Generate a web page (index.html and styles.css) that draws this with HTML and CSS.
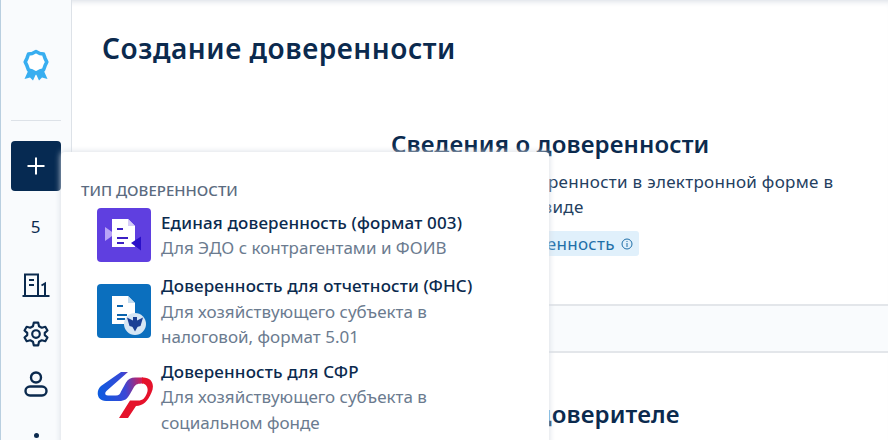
FILE: index.html
```html
<html>
    <head>
        <meta name="viewport" content="width=device-width, initial-scale=1.0">
        <link rel="stylesheet" href="styles.css">
    </head>
    <body>
        <div class="app">
            <aside class="sidebar">
                <div class="logo">
                    <svg width="28" height="32" viewBox="0 0 28 32" fill="none">
                        <path d="M6.500 21 L2.500 30 L8 28.500 L11 31.500 L14 25 L17 31.500 L20 28.500 L25.500 30 L21.500 21 Z" fill="#38aef0"/>
                        <polygon points="14,2.500 17.800,4.500 21.500,5 23,9.200 24.800,13 23,16.800 21.500,21 17.800,22 14,24 10.200,22 6.500,21 5,16.800 3.200,13 5,9.200 6.500,5 10.200,4.500" stroke="#38aef0" stroke-width="3.600" stroke-linejoin="round" fill="#fff"/>
                    </svg>
                </div>
                <div class="divider"></div>
                <button class="add-btn">
                    <svg width="20" height="20" viewBox="0 0 20 20"><path d="M10 1.500 V18.500 M1.500 10 H18.500" stroke="#fff" stroke-width="2"/></svg>
                </button>
                <div class="count">5</div>
                <div class="nav-icon nav-building">
                    <svg width="28" height="24" viewBox="0 0 28 24" fill="none" stroke="#0b2a4e" stroke-width="2">
                        <path d="M0.500 23 H27.500 M3 23 V1.500 H16 V23"/>
                        <path d="M7 7 H12 M7 12 H12" stroke-width="2.200"/>
                        <path d="M19.500 12.500 L23 10.500 V23" />
                    </svg>
                </div>
                <div class="nav-icon nav-gear">
                    <svg width="26" height="26" viewBox="0 0 24 24" fill="none" stroke="#0b2a4e" stroke-width="2" stroke-linejoin="round">
                        <circle cx="12" cy="12" r="3.500"/>
                        <path d="M10 1.500 H14 L14.800 4.800 L17.300 6.200 L20.600 5.300 L22.600 8.700 L20.100 11 V13 L22.600 15.300 L20.600 18.700 L17.300 17.800 L14.800 19.200 L14 22.500 H10 L9.200 19.200 L6.700 17.800 L3.400 18.700 L1.400 15.300 L3.900 13 V11 L1.400 8.700 L3.400 5.300 L6.700 6.200 L9.200 4.800 Z"/>
                    </svg>
                </div>
                <div class="nav-icon nav-user">
                    <svg width="24" height="26" viewBox="0 0 24 26" fill="none" stroke="#0b2a4e" stroke-width="2.400">
                        <circle cx="12" cy="6.500" r="5"/>
                        <rect x="1.500" y="15.500" width="21" height="9" rx="4.500"/>
                    </svg>
                </div>
                <div class="dot"></div>
            </aside>

            <main class="content">
                <h1 class="page-title">Создание доверенности</h1>
                <section class="info">
                    <h2>Сведения о доверенности</h2>
                    <p>Оформление доверенности в электронной форме в<br>и установленном виде</p>
                    <span class="tag">
                        Что такое доверенность
                        <svg width="12" height="12" viewBox="0 0 12 12" fill="none" stroke="#1f6fa8"><circle cx="6" cy="6" r="5"/><path d="M6 5 V9 M6 3 V4"/></svg>
                    </span>
                </section>
                <div class="strip"></div>
                <section class="info info-second">
                    <h2>Сведения о доверителе</h2>
                </section>
            </main>
        </div>

        <div class="menu">
            <div class="menu-title">ТИП ДОВЕРЕННОСТИ</div>
            <div class="menu-item">
                <div class="menu-icon icon-purple">
                    <svg width="54" height="54" viewBox="0 0 54 54">
                        <path d="M8 19 L18 26 L8 33 Z" fill="#b9a4f7"/>
                        <path d="M15 11 H31 L38 18 V39 H15 Z" fill="#fff"/>
                        <path d="M31 11 L38 18 H31 Z" fill="#d5ccf8"/>
                        <path d="M20 21 H26 M20 30 H31 M20 35 H27" stroke="#3b1fc4" stroke-width="2"/>
                        <path d="M34 35 L44 28.500 V42.500 Z" fill="#2a10c8"/>
                    </svg>
                </div>
                <div class="menu-text">
                    <div class="menu-name">Единая доверенность (формат 003)</div>
                    <div class="menu-desc">Для ЭДО с контрагентами и ФОИВ</div>
                </div>
            </div>
            <div class="menu-item">
                <div class="menu-icon icon-blue">
                    <svg width="54" height="54" viewBox="0 0 54 54">
                        <path d="M15 12 H31 L38 19 V40 H15 Z" fill="#fff"/>
                        <path d="M31 12 L38 19 H31 Z" fill="#c4dcf0"/>
                        <path d="M20 22 H26 M20 31 H30 M20 35 H28" stroke="#0b63ad" stroke-width="2"/>
                        <circle cx="38" cy="40" r="11" fill="#d6e6f4"/>
                        <path d="M30 33.500 L36 36.500 V43 L32.500 42 Z M46 33.500 L40 36.500 V43 L43.500 42 Z" fill="#1b3f94"/>
                        <path d="M36 33 H40 V38 L40.500 43 L38 47.500 L35.500 43 L36 38 Z" fill="#1b3f94"/>
                    </svg>
                </div>
                <div class="menu-text">
                    <div class="menu-name">Доверенность для отчетности (ФНС)</div>
                    <div class="menu-desc">Для хозяйствующего субъекта в<br>налоговой, формат 5.01</div>
                </div>
            </div>
            <div class="menu-item">
                <div class="menu-icon">
                    <svg width="56" height="50" viewBox="0 0 56 50">
                        <defs>
                            <linearGradient id="sfr-blue" gradientUnits="userSpaceOnUse" x1="0" y1="20" x2="46" y2="14">
                                <stop offset="0" stop-color="#0b5ce0"/>
                                <stop offset="0.600" stop-color="#3a47d6"/>
                                <stop offset="1" stop-color="#d81c50"/>
                            </linearGradient>
                        </defs>
                        <path d="M24 2 L4 16 C-1 20 -1 31 9 31 H22 C28 31 30 29 33 24 L37 17 C39 14 41 13.500 46 13.500 V7.500 H38 C34 7.500 31 9 29 12.500 L24 21.500 C23 24 22 25.500 19 25.500 H11 C7.500 25.500 7.500 22.500 10 20.500 L31 2 Z" fill="url(#sfr-blue)"/>
                        <path d="M45 7.500 H46 C55 7.500 58 15 54.500 22.500 C51 31 46 36 39 36 L31 48 H22 L33 30.500 H41 C46 30.500 48 28 50 23 C52 18 49 13.500 45 13.500 Z" fill="#e5122b"/>
                    </svg>
                </div>
                <div class="menu-text">
                    <div class="menu-name">Доверенность для СФР</div>
                    <div class="menu-desc">Для хозяйствующего субъекта в<br>социальном фонде</div>
                </div>
            </div>
        </div>
    </body>
</html>
```

FILE: styles.css
```css
html, body {
    margin: 0;
    height: 100%;
    overflow: hidden;
}

body {
    position: relative;
    font-family: "Noto Sans", "Open Sans", sans-serif;
    color: #0b2a4e;
    background-color: #fff;
}

.app {
    display: flex;
    height: 440px;
    border-left: 1px solid #b9cfe0;
    box-shadow: inset 0 6px 6px -5px #d5dae2;
}

.sidebar {
    display: flex;
    flex-direction: column;
    align-items: center;
    flex: 0 0 70px;
    border-right: 1px solid #dde2e8;
    background-color: #f9fbfd;
}

.logo {
    display: flex;
    justify-content: center;
    margin-top: 49px;
    height: 32px;
}

.divider {
    margin-top: 39px;
    width: 50px;
    height: 1px;
    background-color: #dde2e8;
}

.add-btn {
    display: flex;
    align-items: center;
    justify-content: center;
    margin-top: 20px;
    padding: 0;
    width: 50px;
    height: 50px;
    border: 0;
    border-radius: 4px;
    background-color: #062a52;
}

.count {
    margin-top: 24px;
    margin-right: 1px;
    font-size: 17px;
    line-height: 24px;
}

.nav-icon {
    display: flex;
    justify-content: center;
}

.nav-building {
    margin-top: 34px;
}

.nav-gear {
    margin-top: 24px;
}

.nav-user {
    margin-top: 24px;
}

.dot {
    margin-top: 36px;
    width: 5px;
    height: 5px;
    border-radius: 50%;
    background-color: #0b2a4e;
}

.content {
    flex: 1 1 auto;
    min-width: 0;
}

.page-title {
    margin: 31px 0 0 30px;
    font-size: 28px;
    line-height: 34px;
    font-weight: 600;
    letter-spacing: .55px;
}

.info {
    margin: 64px 0 0 319px;
}

.info h2 {
    margin: 0;
    font-size: 24px;
    line-height: 30px;
    font-weight: 600;
    letter-spacing: .13px;
}

.info p {
    margin: 10px 0 0 0;
    font-size: 17px;
    line-height: 25px;
    letter-spacing: .3px;
    color: #24405f;
}

.tag {
    display: inline-flex;
    align-items: center;
    gap: 6px;
    margin-top: 12px;
    padding: 0 6px 0 18px;
    height: 25px;
    font-size: 17px;
    letter-spacing: .3px;
    border-radius: 3px;
    color: #1f6fa8;
    background-color: #e0f0fb;
}

.strip {
    margin-top: 48px;
    height: 45px;
    border-top: 2px solid #e3e6ea;
    border-bottom: 2px solid #e3e6ea;
    background-color: #f9fbfd;
}

.info-second {
    margin-top: 46px;
}

.menu {
    position: absolute;
    left: 61px;
    top: 152px;
    box-sizing: border-box;
    padding: 28px 0 0 20px;
    width: 488px;
    height: 300px;
    border-radius: 4px 4px 0 0;
    background-color: #fff;
    box-shadow: 0 0 6px #d5dae2;
}

.menu-title {
    font-size: 15px;
    line-height: 20px;
    font-weight: 500;
    color: #5b6b80;
}

.menu-item {
    display: flex;
    align-items: center;
    gap: 10px;
    margin-left: 16px;
    margin-bottom: 11px;
}

.menu-item + .menu-item {
    margin-bottom: 9px;
}

.menu-title + .menu-item {
    margin-top: 8px;
}

.menu-icon {
    flex: 0 0 54px;
    width: 54px;
    height: 54px;
    border-radius: 4px;
}

.icon-purple {
    background-color: #5f3fe0;
}

.icon-blue {
    background-color: #0b6fbe;
}

.menu-name {
    font-size: 17px;
    line-height: 25.500px;
    font-weight: 500;
    letter-spacing: .15px;
}

.menu-desc {
    font-size: 17px;
    line-height: 25.500px;
    color: #6b7b8f;
}
```
